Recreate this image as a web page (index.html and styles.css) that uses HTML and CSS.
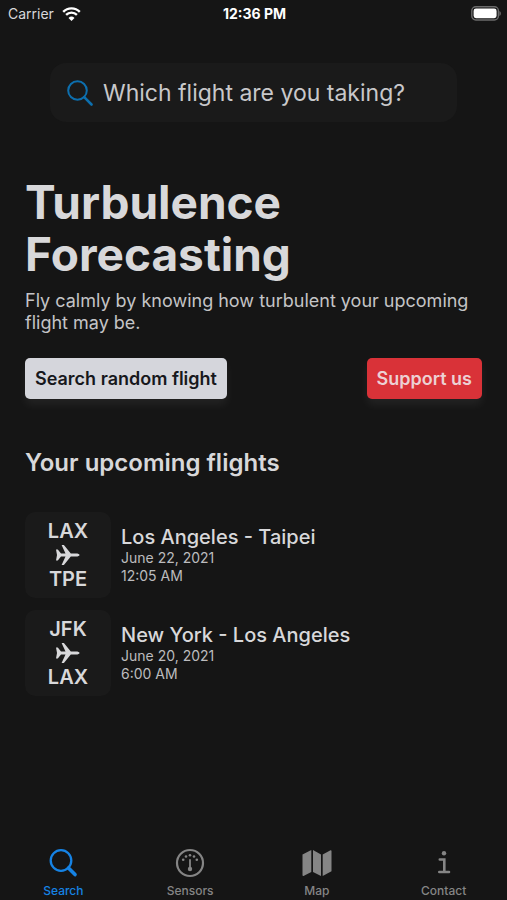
FILE: index.html
```html
<!DOCTYPE html>
<html lang="en">
<head>
    <meta charset="UTF-8">
    <meta name="viewport" content="width=device-width, initial-scale=1.0">
    <title>Turbulence Forecasting</title>
    <link rel="stylesheet" href="styles.css">
</head>
<body>
<header class="status-bar">
    <div class="carrier">
        <span>Carrier</span>
        <svg width="19" height="14" viewBox="0 0 19 14" fill="none" stroke="#fff" stroke-width="2.4">
            <path d="M1.2 4.8a11.7 11.7 0 0 1 16.6 0"/>
            <path d="M4.1 7.9a7.6 7.6 0 0 1 10.8 0"/>
            <path d="M9.5 14L6.5 10.9a4.3 4.3 0 0 1 6 0z" fill="#fff" stroke="none"/>
        </svg>
    </div>
    <div class="time">12:36 PM</div>
    <div class="battery">
        <svg width="31" height="15" viewBox="0 0 31 15">
            <rect x="1.8" y="0.8" width="26.6" height="13.2" rx="4" fill="none" stroke="#6b6b6b" stroke-width="1.4"/>
            <rect x="3.6" y="2.6" width="23" height="9.6" rx="2.4" fill="#fff"/>
            <path d="M29.400 5v5c2-.8 2-4.200 0-5z" fill="#6b6b6b"/>
        </svg>
    </div>
</header>

<main class="content">
    <form class="search-box">
        <label for="flight-search" aria-label="Search">
            <svg width="26" height="26" viewBox="0 0 26 26" fill="none" stroke="#0d6fae" stroke-width="2">
                <circle cx="10.500" cy="10.500" r="9.300"/>
                <path d="M17.200 17.200L24.500 24.500" stroke-width="2.600" stroke-linecap="round"/>
            </svg>
        </label>
        <input type="text" id="flight-search" placeholder="Which flight are you taking?">
    </form>

    <h1>Turbulence Forecasting</h1>
    <p class="intro">Fly calmly by knowing how turbulent your upcoming flight may be.</p>

    <div class="actions">
        <button type="button" class="button">Search random flight</button>
        <button type="button" class="button support">Support us</button>
    </div>

    <h2>Your upcoming flights</h2>
    <ul class="flights">
        <li class="flight">
            <div class="route">
                <span>LAX</span>
                <svg width="24" height="20" viewBox="0 0 24 20" fill="#d8d8da">
                    <path d="M0 4.500h1.800l3.200 4h4.500L5.600 0h2.300l6.900 8.500h5.200c2 0 3.600.7 3.600 1.500s-1.600 1.500-3.600 1.500h-5.200L7.900 20H5.600l3.900-8.500H5l-3.200 4H0l1-5.500z"/>
                </svg>
                <span>TPE</span>
            </div>
            <div class="details">
                <h3>Los Angeles - Taipei</h3>
                <p>June 22, 2021</p>
                <p>12:05 AM</p>
            </div>
        </li>
        <li class="flight">
            <div class="route">
                <span>JFK</span>
                <svg width="24" height="20" viewBox="0 0 24 20" fill="#d8d8da">
                    <path d="M0 4.500h1.800l3.200 4h4.500L5.600 0h2.300l6.900 8.500h5.200c2 0 3.600.7 3.600 1.500s-1.600 1.500-3.600 1.500h-5.200L7.900 20H5.600l3.900-8.500H5l-3.200 4H0l1-5.500z"/>
                </svg>
                <span>LAX</span>
            </div>
            <div class="details">
                <h3>New York - Los Angeles</h3>
                <p>June 20, 2021</p>
                <p>6:00 AM</p>
            </div>
        </li>
    </ul>
</main>

<nav class="tab-bar">
    <a href="#search" class="tab active">
        <svg width="30" height="30" viewBox="0 0 30 30" fill="none" stroke="currentColor" stroke-width="2.300">
            <circle cx="13" cy="12.500" r="10.300"/>
            <path d="M20.500 20L27 26.600" stroke-width="3.600" stroke-linecap="round"/>
        </svg>
        <span>Search</span>
    </a>
    <a href="#sensors" class="tab">
        <svg width="30" height="30" viewBox="0 0 30 30" fill="currentColor">
            <circle cx="15" cy="15" r="13" fill="none" stroke="currentColor" stroke-width="2.200"/>
            <path d="M15 12v9" stroke="currentColor" stroke-width="1.800" stroke-linecap="round"/>
            <circle cx="15" cy="21" r="2.200"/>
            <circle cx="15" cy="7.300" r="1.300"/>
            <circle cx="11" cy="8.500" r="1.300"/>
            <circle cx="19" cy="8.500" r="1.300"/>
            <circle cx="8.200" cy="11.800" r="1.300"/>
            <circle cx="21.800" cy="11.800" r="1.300"/>
        </svg>
        <span>Sensors</span>
    </a>
    <a href="#map" class="tab">
        <svg width="30" height="30" viewBox="0 0 30 30" fill="currentColor">
            <path d="M.5 6.500L9.300 2v22L1.500 28Q.5 28.300.5 27z"/>
            <path d="M11 2l8 4.500V28l-8-4z"/>
            <path d="M20.700 6.500L28.500 2.200Q29.500 2 29.500 3v20.300L20.700 28z"/>
        </svg>
        <span>Map</span>
    </a>
    <a href="#contact" class="tab">
        <svg width="30" height="30" viewBox="0 0 30 30" fill="none" stroke="currentColor" stroke-width="2.600" stroke-linecap="round">
            <circle cx="15" cy="5.200" r="2.200" fill="currentColor" stroke="none"/>
            <path d="M10.800 11.500h4.500v12.500M10.300 24h9.700"/>
        </svg>
        <span>Contact</span>
    </a>
</nav>
</body>
</html>
```
FILE: styles.css
```css
* {
    box-sizing: border-box;
}
body {
    display: flex;
    flex-direction: column;
    min-height: 100vh;
    margin: 0;
    background-color: #151515;
    color: #d8d8da;
    font-family: Inter, "Liberation Sans", sans-serif;
}
h1, h2, h3, p, ul {
    margin: 0;
    padding: 0;
}
svg {
    display: block;
    flex: none;
}
.status-bar {
    display: grid;
    grid-template-columns: 1fr auto 1fr;
    align-items: center;
    height: 27px;
    padding: 0 6px 0 8px;
    font-size: 14px;
}
.carrier {
    display: flex;
    align-items: center;
    gap: 8px;
}
.time {
    color: #fff;
    font-weight: 700;
}
.battery {
    justify-self: end;
}
.content {
    flex: 1;
    padding: 36px 25px 0 25px;
}
.search-box {
    display: flex;
    align-items: center;
    gap: 10px;
    height: 59px;
    margin: 0 25px;
    padding: 0 17px;
    background-color: #1a1a1a;
    border-radius: 16px;
}
.search-box input {
    flex: 1;
    min-width: 0;
    padding: 0;
    border: none;
    outline: none;
    background: none;
    color: #d8d8da;
    font-family: inherit;
    font-size: 23px;
}
.search-box input::placeholder {
    color: #c8c8ca;
    opacity: 1;
}
h1 {
    max-width: 360px;
    margin-top: 54px;
    font-size: 46px;
    font-weight: 700;
    line-height: 52px;
}
.intro {
    margin-top: 10px;
    color: #c4c4c6;
    font-size: 18px;
    line-height: 22px;
}
.actions {
    display: flex;
    justify-content: space-between;
    margin-top: 24px;
}
.button {
    height: 41px;
    padding: 0 10px;
    border: none;
    border-radius: 5px;
    background-color: #d5d6dc;
    box-shadow: 0 6px 10px rgba(255, 255, 255, 0.06);
    color: #17181c;
    font-family: inherit;
    font-size: 18px;
    font-weight: 600;
    cursor: pointer;
}
.button.support {
    background-color: #d93238;
    color: #ecd0d3;
}
h2 {
    margin-top: 49px;
    font-size: 24px;
    font-weight: 600;
    line-height: 30px;
}
.flights {
    display: flex;
    flex-direction: column;
    gap: 12px;
    margin-top: 34px;
    list-style: none;
}
.flight {
    display: flex;
    align-items: center;
    gap: 10px;
}
.route {
    display: flex;
    flex-direction: column;
    align-items: center;
    justify-content: center;
    gap: 2px;
    width: 86px;
    height: 86px;
    background-color: #1a1a1a;
    border-radius: 10px;
    font-size: 20px;
    font-weight: 600;
    line-height: 24px;
}
.details {
    color: #bcbcbe;
    font-size: 14px;
    line-height: 18px;
}
.details h3 {
    color: #d8d8da;
    font-size: 20px;
    font-weight: 500;
    line-height: 24px;
}
.tab-bar {
    display: flex;
    height: 52px;
}
.tab {
    display: flex;
    flex: 1;
    flex-direction: column;
    align-items: center;
    gap: 5px;
    color: #858585;
    font-size: 12px;
    font-weight: 500;
    line-height: 15px;
    text-decoration: none;
}
.tab.active {
    color: #1683e4;
}
```
